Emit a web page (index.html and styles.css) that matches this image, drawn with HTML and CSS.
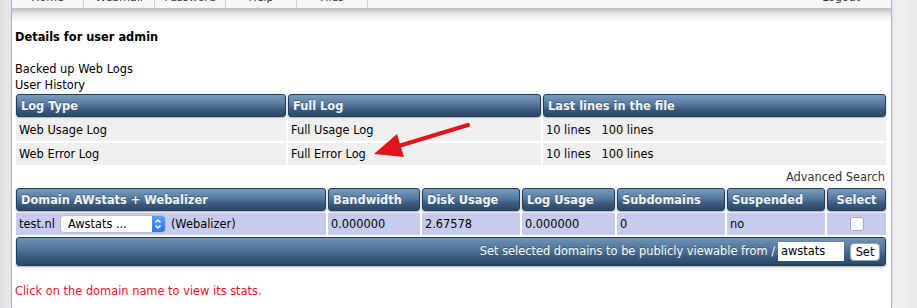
FILE: index.html
```html
<!DOCTYPE html>
<html lang="en">
  <head>
    <meta charset="UTF-8" />
    <title>Details for user admin</title>
    <link rel="stylesheet" href="styles.css">
  </head>
  <body>
    <div class="page">
      <div class="topnav">
        <a class="nav-item" href="#">Home</a>
        <a class="nav-item" href="#">Webmail</a>
        <a class="nav-item" href="#">Password</a>
        <a class="nav-item" href="#">Help</a>
        <a class="nav-item" href="#">Files</a>
        <a class="nav-logout" href="#">Logout</a>
      </div>
      <div class="nav-shadow"></div>

      <div class="content">
        <h3>Details for user admin</h3>

        <div class="links">
          <a href="#">Backed up Web Logs</a>
          <a href="#">User History</a>
        </div>

        <div class="log-wrap">
          <table class="list logs">
            <tr>
              <th class="col-type">Log Type</th>
              <th class="col-full">Full Log</th>
              <th>Last lines in the file</th>
            </tr>
            <tr>
              <td>Web Usage Log</td>
              <td><a href="#">Full Usage Log</a></td>
              <td><a href="#">10 lines</a>&nbsp;&nbsp;&nbsp;<a href="#">100 lines</a></td>
            </tr>
            <tr>
              <td>Web Error Log</td>
              <td><a href="#">Full Error Log</a></td>
              <td><a href="#">10 lines</a>&nbsp;&nbsp;&nbsp;<a href="#">100 lines</a></td>
            </tr>
          </table>

          <!-- annotation arrow pointing at the error log link -->
          <svg class="arrow" width="110" height="50" viewBox="360 115 110 50">
            <line x1="468" y1="125" x2="392" y2="148" stroke="#e3131b" stroke-width="4" stroke-linecap="round" />
            <polygon points="374,154 397,134 404,157" fill="#e3131b" />
          </svg>
        </div>

        <div class="adv-search"><a href="#">Advanced Search</a></div>

        <table class="list domains">
          <tr>
            <th class="col-domain">Domain AWstats + Webalizer</th>
            <th class="col-bw">Bandwidth</th>
            <th class="col-disk">Disk Usage</th>
            <th class="col-log">Log Usage</th>
            <th class="col-sub">Subdomains</th>
            <th class="col-susp">Suspended</th>
            <th class="col-select center">Select</th>
          </tr>
          <tr class="row-domain">
            <td>
              <div class="domain-cell">
                <a href="#">test.nl</a>
                <span class="fake-select">
                  <span class="fake-select-text">Awstats ...</span>
                  <span class="fake-select-arrow">
                    <svg width="8" height="12" viewBox="0 0 8 12">
                      <path d="M1.5 4.5 L4 2 L6.5 4.5 M1.5 7.5 L4 10 L6.5 7.5" fill="none" stroke="#fff" stroke-width="1.4" />
                    </svg>
                  </span>
                </span>
                <a href="#">(Webalizer)</a>
              </div>
            </td>
            <td>0.000000</td>
            <td>2.67578</td>
            <td>0.000000</td>
            <td>0</td>
            <td>no</td>
            <td class="center"><span class="checkbox"></span></td>
          </tr>
          <tr>
            <td colspan="7" class="footer-bar">
              Set selected domains to be publicly viewable from /<span class="text-box">awstats</span><span class="set-button">Set</span>
            </td>
          </tr>
        </table>

        <p class="hint">Click on the domain name to view its stats.</p>
      </div>
    </div>
  </body>
</html>
```

FILE: styles.css
```css
body {
  margin: 0;
  padding: 0;
  font-family: "DejaVu Sans", Verdana, sans-serif;
  font-size: 11.4px;
  color: #000;
  background: linear-gradient(to right, #dcdcdc, #f3f3f3 11px, #f3f3f3 892px, #e9e9e9);
  height: 308px;
  overflow: hidden;
}

a {
  color: #000;
  text-decoration: none;
}

.page {
  margin-left: 11px;
  width: 879px;
  height: 308px;
  background: white;
  border-left: 1px solid #a6b3c4;
  border-right: 1px solid #a6b3c4;
  box-shadow: 0 0 8px rgba(0, 0, 0, 0.12);
}

.topnav {
  display: flex;
  height: 8px;
  overflow: hidden;
  background: #f7f7f7;
  font-size: 11px;
  color: #333;
}

.nav-item {
  display: block;
  width: 70px;
  margin-top: -9px;
  line-height: 14px;
  text-align: center;
  color: #333;
  border-right: 1px solid #cfcfcf;
}

.nav-item:first-child {
  width: 71px;
}

.nav-logout {
  margin-left: auto;
  margin-right: 31px;
  margin-top: -9px;
  line-height: 14px;
  color: #333;
}

.nav-shadow {
  height: 14px;
  background: linear-gradient(#bcbcbc, #e6e6e6 40%, #ffffff);
}

.content {
  padding: 0 3px 0 2px;
}

h3 {
  margin: 7px 0 0 1px;
  font-size: 11.4px;
  line-height: 16px;
  font-weight: bold;
}

.links {
  margin: 16px 0 0 1px;
  display: flex;
  flex-direction: column;
  line-height: 16px;
}

.log-wrap {
  position: relative;
  margin-top: -1px;
}

.arrow {
  position: absolute;
  left: 346px;
  top: 23px;
}

.list {
  width: 100%;
  table-layout: fixed;
  border-collapse: separate;
  border-spacing: 2px;
}

.list th {
  height: 23px;
  padding: 0 4px;
  text-align: left;
  font-weight: bold;
  color: #f2f5f9;
  background: linear-gradient(#7a9cc0, #55799e 45%, #3a5a7c 70%, #2b4969);
  border: 1px solid #243e5a;
  border-radius: 3px;
  box-shadow: 0 1px 2px rgba(0, 0, 0, 0.35);
  box-sizing: border-box;
  text-shadow: 0 -1px 0 rgba(0, 0, 0, 0.3);
}

.list td {
  height: 22px;
  padding: 0 3px;
  box-sizing: border-box;
  background: #efefef;
}

.list th.center,
.list td.center {
  text-align: center;
}

.col-type {
  width: 270px;
}

.col-full {
  width: 253px;
}

.adv-search {
  text-align: right;
  line-height: 16px;
  margin: 2px 3px 1px 0;
}

.adv-search a {
  color: #333;
}

.col-domain {
  width: 310px;
}

.col-bw {
  width: 92px;
}

.col-disk {
  width: 98px;
}

.col-log {
  width: 93px;
}

.col-sub {
  width: 108px;
}

.col-susp {
  width: 98px;
}

.col-select {
  width: 59px;
}

.row-domain td {
  background: #c6ccef;
}

.domain-cell {
  display: flex;
  align-items: center;
  gap: 5px;
}

.fake-select {
  display: inline-flex;
  align-items: stretch;
  width: 106px;
  height: 18px;
  box-sizing: border-box;
  background: white;
  border: 1px solid #b9bcc8;
  border-radius: 4px;
  overflow: hidden;
}

.fake-select-text {
  flex: 1;
  padding-left: 7px;
  line-height: 16px;
}

.fake-select-arrow {
  width: 13px;
  display: flex;
  align-items: center;
  justify-content: center;
  background: linear-gradient(#5c9ff5, #2c75e6);
}

.checkbox {
  display: inline-block;
  width: 12px;
  height: 12px;
  margin-top: 3px;
  background: white;
  border: 1px solid #a8a8a8;
  border-radius: 3px;
}

.list td.footer-bar {
  height: 29px;
  padding: 0 5px 0 0;
  text-align: right;
  color: #ffffff;
  background: linear-gradient(#6f92b7, #4f7398 45%, #395a7c 70%, #2a4868);
  border: 1px solid #243e5a;
  border-radius: 3px;
  box-shadow: 0 1px 2px rgba(0, 0, 0, 0.35);
  text-shadow: 0 -1px 0 rgba(0, 0, 0, 0.3);
}

.text-box {
  display: inline-block;
  width: 66px;
  height: 19px;
  margin-left: 3px;
  padding-left: 3px;
  box-sizing: border-box;
  line-height: 19px;
  text-align: left;
  color: #000;
  background: white;
  text-shadow: none;
  vertical-align: middle;
}

.set-button {
  display: inline-block;
  width: 30px;
  height: 18px;
  margin-left: 6px;
  box-sizing: border-box;
  line-height: 16px;
  text-align: center;
  color: #000;
  background: white;
  border: 1px solid #9aa4b2;
  border-radius: 4px;
  text-shadow: none;
  vertical-align: middle;
}

.hint {
  margin: 15px 0 0 1px;
  line-height: 16px;
  color: #f0112c;
}
```
